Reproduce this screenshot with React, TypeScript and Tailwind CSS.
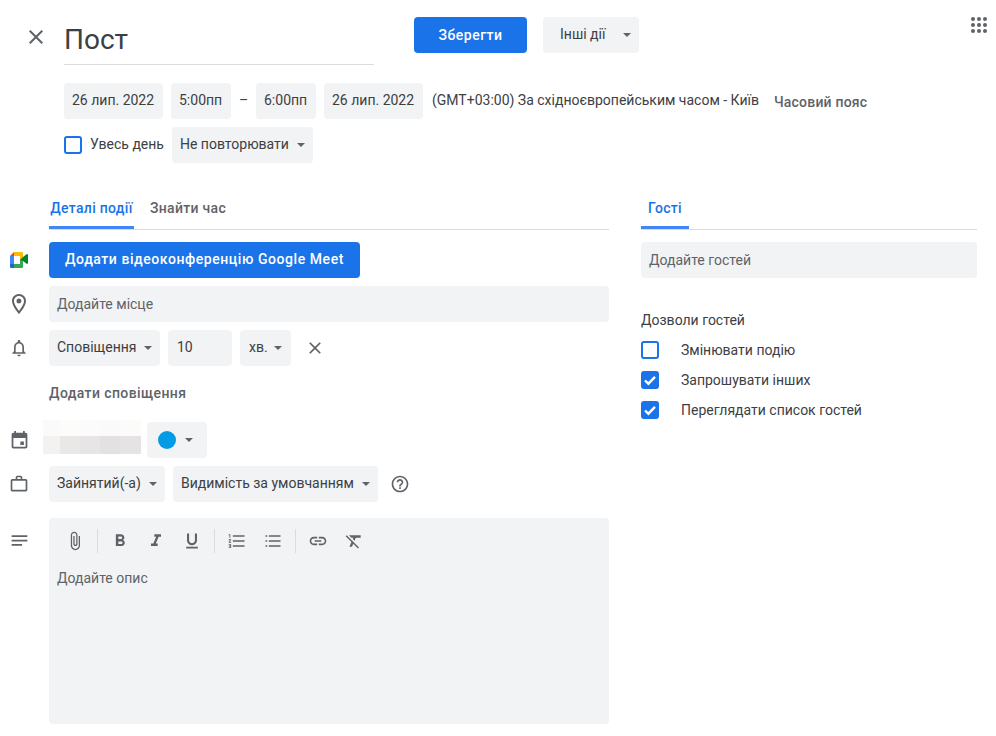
import React from 'react';

// material icon paths used around the form
const paths = {
  close: 'M19 6.41L17.59 5 12 10.59 6.41 5 5 6.41 10.59 12 5 17.59 6.41 19 12 13.41 17.59 19 19 17.59 13.41 12z',
  place: 'M12 2C8.13 2 5 5.13 5 9c0 5.25 7 13 7 13s7-7.75 7-13c0-3.87-3.13-7-7-7zM7 9c0-2.76 2.24-5 5-5s5 2.24 5 5c0 2.88-2.88 7.19-5 9.88C9.92 16.21 7 11.85 7 9zM12 6.5a2.5 2.5 0 1 0 0 5 2.5 2.5 0 0 0 0-5z',
  bell: 'M12 22c1.1 0 2-.9 2-2h-4c0 1.1.9 2 2 2zm6-6v-5c0-3.07-1.63-5.64-4.5-6.32V4c0-.83-.67-1.5-1.5-1.5s-1.5.67-1.5 1.5v.68C7.64 5.36 6 7.92 6 11v5l-2 2v1h16v-1l-2-2zm-2 1H8v-6c0-2.48 1.51-4.5 4-4.5s4 2.02 4 4.5v6z',
  event: 'M19 3h-1V1h-2v2H8V1H6v2H5a2 2 0 0 0-2 2v14a2 2 0 0 0 2 2h14a2 2 0 0 0 2-2V5a2 2 0 0 0-2-2zm0 16H5V9h14v10zM13 13h4v4h-4z',
  work: 'M14 6V4h-4v2h4zM4 8v11h16V8H4zm16-2c1.11 0 2 .89 2 2v11c0 1.11-.89 2-2 2H4c-1.11 0-2-.89-2-2l.01-11c0-1.11.88-2 1.99-2h4V4c0-1.11.89-2 2-2h4c1.11 0 2 .89 2 2v2h4z',
  notes: 'M3 18h12v-2H3v2zM3 6v2h18V6H3zm0 7h18v-2H3v2z',
  help: 'M11 18h2v-2h-2v2zm1-16C6.48 2 2 6.48 2 12s4.48 10 10 10 10-4.48 10-10S17.52 2 12 2zm0 18c-4.41 0-8-3.59-8-8s3.59-8 8-8 8 3.59 8 8-3.59 8-8 8zm0-14c-2.21 0-4 1.79-4 4h2c0-1.1.9-2 2-2s2 .9 2 2c0 2-3 1.75-3 5h2c0-2.25 3-2.5 3-5 0-2.21-1.79-4-4-4z',
  attach: 'M16.5 6v11.5c0 2.21-1.79 4-4 4s-4-1.79-4-4V5c0-1.38 1.12-2.5 2.5-2.5s2.5 1.12 2.5 2.5v10.5c0 .55-.45 1-1 1s-1-.45-1-1V6H10v9.5c0 1.38 1.12 2.5 2.5 2.5s2.5-1.12 2.5-2.5V5c0-2.21-1.79-4-4-4S7 2.79 7 5v12.5c0 3.04 2.46 5.5 5.5 5.5s5.5-2.46 5.5-5.5V6h-1.5z',
  bold: 'M15.6 10.79c.97-.67 1.65-1.77 1.65-2.79 0-2.26-1.75-4-4-4H7v14h7.04c2.09 0 3.71-1.7 3.71-3.79 0-1.52-.86-2.82-2.15-3.42zM10 6.5h3c.83 0 1.5.67 1.5 1.5s-.67 1.5-1.5 1.5h-3v-3zm3.5 9H10v-3h3.5c.83 0 1.5.67 1.5 1.5s-.67 1.5-1.5 1.5z',
  italic: 'M10 4v3h2.21l-3.42 8H6v3h8v-3h-2.21l3.42-8H18V4z',
  underline: 'M12 17c3.31 0 6-2.69 6-6V3h-2.5v8c0 1.93-1.57 3.5-3.5 3.5S8.5 12.93 8.5 11V3H6v8c0 3.31 2.69 6 6 6zm-7 2v2h14v-2H5z',
  numbered: 'M2 17h2v.5H3v1h1v.5H2v1h3v-4H2v1zm1-9h1V4H2v1h1v3zm-1 3h1.8L2 13.1v.9h3v-1H3.2L5 10.9V10H2v1zm5-6v2h14V5H7zm0 14h14v-2H7v2zm0-6h14v-2H7v2z',
  bulleted: 'M3 5h2v2H3zM3 11h2v2H3zM3 17h2v2H3zM7 19h14v-2H7v2zm0-6h14v-2H7v2zm0-8v2h14V5H7z',
  link: 'M3.9 12c0-1.71 1.39-3.1 3.1-3.1h4V7H7c-2.76 0-5 2.24-5 5s2.24 5 5 5h4v-1.9H7c-1.71 0-3.1-1.39-3.1-3.1zM8 13h8v-2H8v2zm9-6h-4v1.9h4c1.71 0 3.1 1.39 3.1 3.1s-1.39 3.1-3.1 3.1h-4V17h4c2.76 0 5-2.24 5-5s-2.24-5-5-5z',
  clear: 'M3.27 5L2 6.27l6.97 6.97L6.5 19h3l1.57-3.66L16.73 21 18 19.73 3.55 5.27 3.27 5zM6 5v.18L8.82 8h2.4l-.72 1.68 2.1 2.1L14.21 8H20V5H6z',
};

const Icon = ({ d, className = 'h-6 w-6' }: { d: string; className?: string }) => (
  <svg viewBox="0 0 24 24" className={`${className} fill-[#5f6368]`}>
    <path d={d} />
  </svg>
);

const Caret = ({ className = '' }: { className?: string }) => (
  <span className={`h-0 w-0 border-x-[4px] border-t-[4px] border-x-transparent border-t-[#5f6368] ${className}`} />
);

const Chip = ({ children, className = '' }: { children: React.ReactNode; className?: string }) => (
  <div className={`flex h-9 items-center rounded bg-[#f1f3f4] px-2 text-sm text-[#3c4043] ${className}`}>{children}</div>
);

const Select = ({ label, className = '' }: { label: string; className?: string }) => (
  <Chip className={className}>
    <span className="pb-[2px]">{label}</span>
    <Caret className="ml-auto" />
  </Chip>
);

const Row = ({ icon, children, className = '' }: { icon?: React.ReactNode; children: React.ReactNode; className?: string }) => (
  <div className={`flex items-center ${className}`}>
    <div className="flex w-[49px] shrink-0 justify-center pr-[11px]">{icon}</div>
    {children}
  </div>
);

const Tab = ({ label, active, className = '' }: { label: string; active?: boolean; className?: string }) => (
  <div
    className={`flex h-[39px] items-center justify-center text-sm font-medium tracking-[0.3px] ${
      active ? 'border-b-[3px] border-[#4285f4] pb-[1px] text-[#1a73e8]' : 'pb-[4px] text-[#5f6368]'
    } ${className}`}
  >
    {label}
  </div>
);

const Perm = ({ label, checked }: { label: string; checked?: boolean }) => (
  <div className="flex h-[30px] items-center">
    {checked ? (
      <span className="flex h-[18px] w-[18px] items-center justify-center rounded-[3px] bg-[#1a73e8]">
        <svg viewBox="0 0 18 18" className="h-[18px] w-[18px] fill-none stroke-white stroke-[2.4]">
          <path d="M4 9.5l3.4 3.2L14 5.8" />
        </svg>
      </span>
    ) : (
      <span className="h-[18px] w-[18px] rounded-[3px] border-2 border-[#1a73e8]" />
    )}
    <span className="ml-[22px] text-sm text-[#3c4043]">{label}</span>
  </div>
);

const ToolBtn = ({ d }: { d: string }) => (
  <div className="flex h-9 w-9 items-center justify-center">
    <Icon d={d} className="h-5 w-5" />
  </div>
);

const Sep = () => <div className="mx-1 h-6 w-px bg-[#dadce0]" />;

export default function App() {
  return (
    <div className="relative h-[736px] w-[996px] overflow-hidden bg-white font-['Roboto',sans-serif]">
      {/* header */}
      <div className="flex h-[65px] items-start pl-6">
        <div className="mt-[25px] flex h-6 w-6 items-center justify-center">
          <Icon d={paths.close} />
        </div>
        <div className="ml-4 flex h-[65px] w-[310px] items-center border-b border-[#dadce0] pt-[15px] text-[28px] text-[#3c4043]">
          Пост
        </div>
        <button className="ml-10 mt-[17px] h-9 w-[113px] rounded bg-[#1a73e8] text-sm font-medium tracking-[0.5px] text-white">
          Зберегти
        </button>
        <div className="ml-4 mt-[17px] flex h-9 w-24 items-center rounded bg-[#f1f3f4] pl-[17px] pr-2 text-sm text-[#3c4043]">
          <span className="pb-[2px]">Інші дії</span>
          <Caret className="ml-auto" />
        </div>
        <svg viewBox="0 0 16 16" className="ml-auto mr-[9px] mt-[17px] h-4 w-4 fill-[#5f6368]">
          {[2, 8, 14].map((cy) =>
            [2, 8, 14].map((cx) => <circle key={`${cx}-${cy}`} cx={cx} cy={cy} r="2" />),
          )}
        </svg>
      </div>

      {/* date and time */}
      <div className="ml-16 mt-[18px] flex items-center">
        <Chip className="w-[99px] pb-[2px]">26 лип. 2022</Chip>
        <Chip className="ml-2 w-[60px] pb-[2px]">5:00пп</Chip>
        <span className="w-[25px] pb-[2px] text-center text-sm text-[#3c4043]">–</span>
        <Chip className="w-[60px] pb-[2px]">6:00пп</Chip>
        <Chip className="ml-2 w-[99px] pb-[2px]">26 лип. 2022</Chip>
        <span className="ml-[9px] pb-[2px] text-sm text-[#3c4043]">(GMT+03:00) За східноєвропейським часом - Київ</span>
        <span className="ml-[15px] pt-[2px] text-sm font-medium tracking-[0.2px] text-[#5f6368]">Часовий пояс</span>
      </div>
      <div className="ml-16 mt-2 flex items-center">
        <span className="h-[18px] w-[18px] rounded-[3px] border-2 border-[#1a73e8]" />
        <span className="ml-2 pb-[2px] text-sm text-[#3c4043]">Увесь день</span>
        <Select label="Не повторювати" className="ml-2 w-[141px]" />
      </div>

      {/* two columns */}
      <div className="mt-[27px] flex">
        <div className="w-[609px]">
          <div className="ml-[49px] flex h-10 border-b border-[#dadce0]">
            <Tab label="Деталі події" active className="w-[85px]" />
            <Tab label="Знайти час" className="ml-4" />
          </div>

          <Row
            className="mt-3"
            icon={
              <svg viewBox="0 0 18 16" className="h-4 w-[18px]">
                <path d="M4 0L0 4h4z" fill="#ea4335" />
                <path d="M0 4h4v8H0z" fill="#4285f4" />
                <path d="M0 12h4v4H1.3A1.3 1.3 0 0 1 0 14.7z" fill="#1967d2" />
                <path d="M4 0h7.7A1.3 1.3 0 0 1 13 1.3V5l-3 3V4H4z" fill="#fbbc04" />
                <path d="M4 12h6V8l3-3v9.7a1.3 1.3 0 0 1-1.3 1.3H4z" fill="#34a853" />
                <path d="M10 8l3-3 3.6-2.8c.6-.4 1.4 0 1.4.7v8.2c0 .7-.8 1.1-1.4.7L13 9z" fill="#00832d" />
              </svg>
            }
          >
            <button className="h-9 w-[311px] rounded bg-[#1a73e8] pb-[2px] text-sm font-medium tracking-[0.56px] text-white">
              Додати відеоконференцію Google Meet
            </button>
          </Row>

          <Row className="mt-2" icon={<Icon d={paths.place} />}>
            <Chip className="w-[560px] text-[#5f6368]">Додайте місце</Chip>
          </Row>

          <Row className="mt-2" icon={<Icon d={paths.bell} className="h-5 w-5" />}>
            <Select label="Сповіщення" className="w-[111px]" />
            <Chip className="ml-2 w-16 pb-[2px] pl-[9px]">10</Chip>
            <Select label="хв." className="ml-2 w-[51px] px-[9px]" />
            <div className="ml-3 flex h-6 w-6 items-center justify-center">
              <Icon d={paths.close} className="h-5 w-5" />
            </div>
          </Row>

          <div className="ml-[49px] mt-[17px] text-sm font-medium tracking-[0.4px] text-[#5f6368]">Додати сповіщення</div>

          {/* calendar name is blurred out in the picture */}
          <div className="mt-[19px] flex items-center">
            <div className="flex w-[43px] shrink-0 justify-center pr-[5px]">
              <Icon d={paths.event} className="h-[21px] w-[21px]" />
            </div>
            <div className="mt-[-6px] grid h-[34px] w-[98px] grid-cols-[17px_20px_20px_20px_21px] grid-rows-[16px_18px]">
              <div className="bg-[#fbfafa]" />
              <div className="bg-[#fcfcfb]" />
              <div className="bg-[#fcfbfb]" />
              <div className="bg-[#fbfafa]" />
              <div className="bg-[#fbfbfa]" />
              <div className="bg-[#f3f2f0]" />
              <div className="bg-[#e9e8e7]" />
              <div className="bg-[#e7e5e5]" />
              <div className="bg-[#e3e1e1]" />
              <div className="bg-[#e5e3e4]" />
            </div>
            <div className="ml-[6px] flex h-9 w-[60px] items-center rounded bg-[#f1f3f4] pl-[11px]">
              <span className="h-[18px] w-[18px] rounded-full bg-[#039be5]" />
              <Caret className="ml-[9px]" />
            </div>
          </div>

          <Row className="mt-2" icon={<Icon d={paths.work} className="h-5 w-5" />}>
            <Select label="Зайнятий(-а)" className="w-[116px]" />
            <Select label="Видимість за умовчанням" className="ml-2 w-[205px]" />
            <div className="ml-[10px] flex h-6 w-6 items-center justify-center">
              <Icon d={paths.help} className="h-5 w-5" />
            </div>
          </Row>

          <div className="mt-4 flex items-start">
            <div className="flex w-[49px] shrink-0 justify-center pt-[12px] pr-[11px]">
              <Icon d={paths.notes} className="h-[21px] w-[21px]" />
            </div>
            <div className="h-[206px] w-[560px] rounded bg-[#f1f3f4]">
              <div className="flex h-[46px] items-center pl-2">
                <ToolBtn d={paths.attach} />
                <Sep />
                <ToolBtn d={paths.bold} />
                <ToolBtn d={paths.italic} />
                <ToolBtn d={paths.underline} />
                <Sep />
                <ToolBtn d={paths.numbered} />
                <ToolBtn d={paths.bulleted} />
                <Sep />
                <ToolBtn d={paths.link} />
                <ToolBtn d={paths.clear} />
              </div>
              <div className="mt-[4px] px-2 text-sm leading-5 text-[#5f6368]">Додайте опис</div>
            </div>
          </div>
        </div>

        {/* guests */}
        <div className="ml-8 w-[336px]">
          <div className="flex h-10 border-b border-[#dadce0]">
            <Tab label="Гості" active className="w-12" />
          </div>
          <Chip className="mt-3 text-[#5f6368]">Додайте гостей</Chip>
          <div className="mt-[32px] text-sm leading-5 text-[#3c4043]">Дозволи гостей</div>
          <div className="mt-[5px]">
            <Perm label="Змінювати подію" />
            <Perm label="Запрошувати інших" checked />
            <Perm label="Переглядати список гостей" checked />
          </div>
        </div>
      </div>
    </div>
  );
}
